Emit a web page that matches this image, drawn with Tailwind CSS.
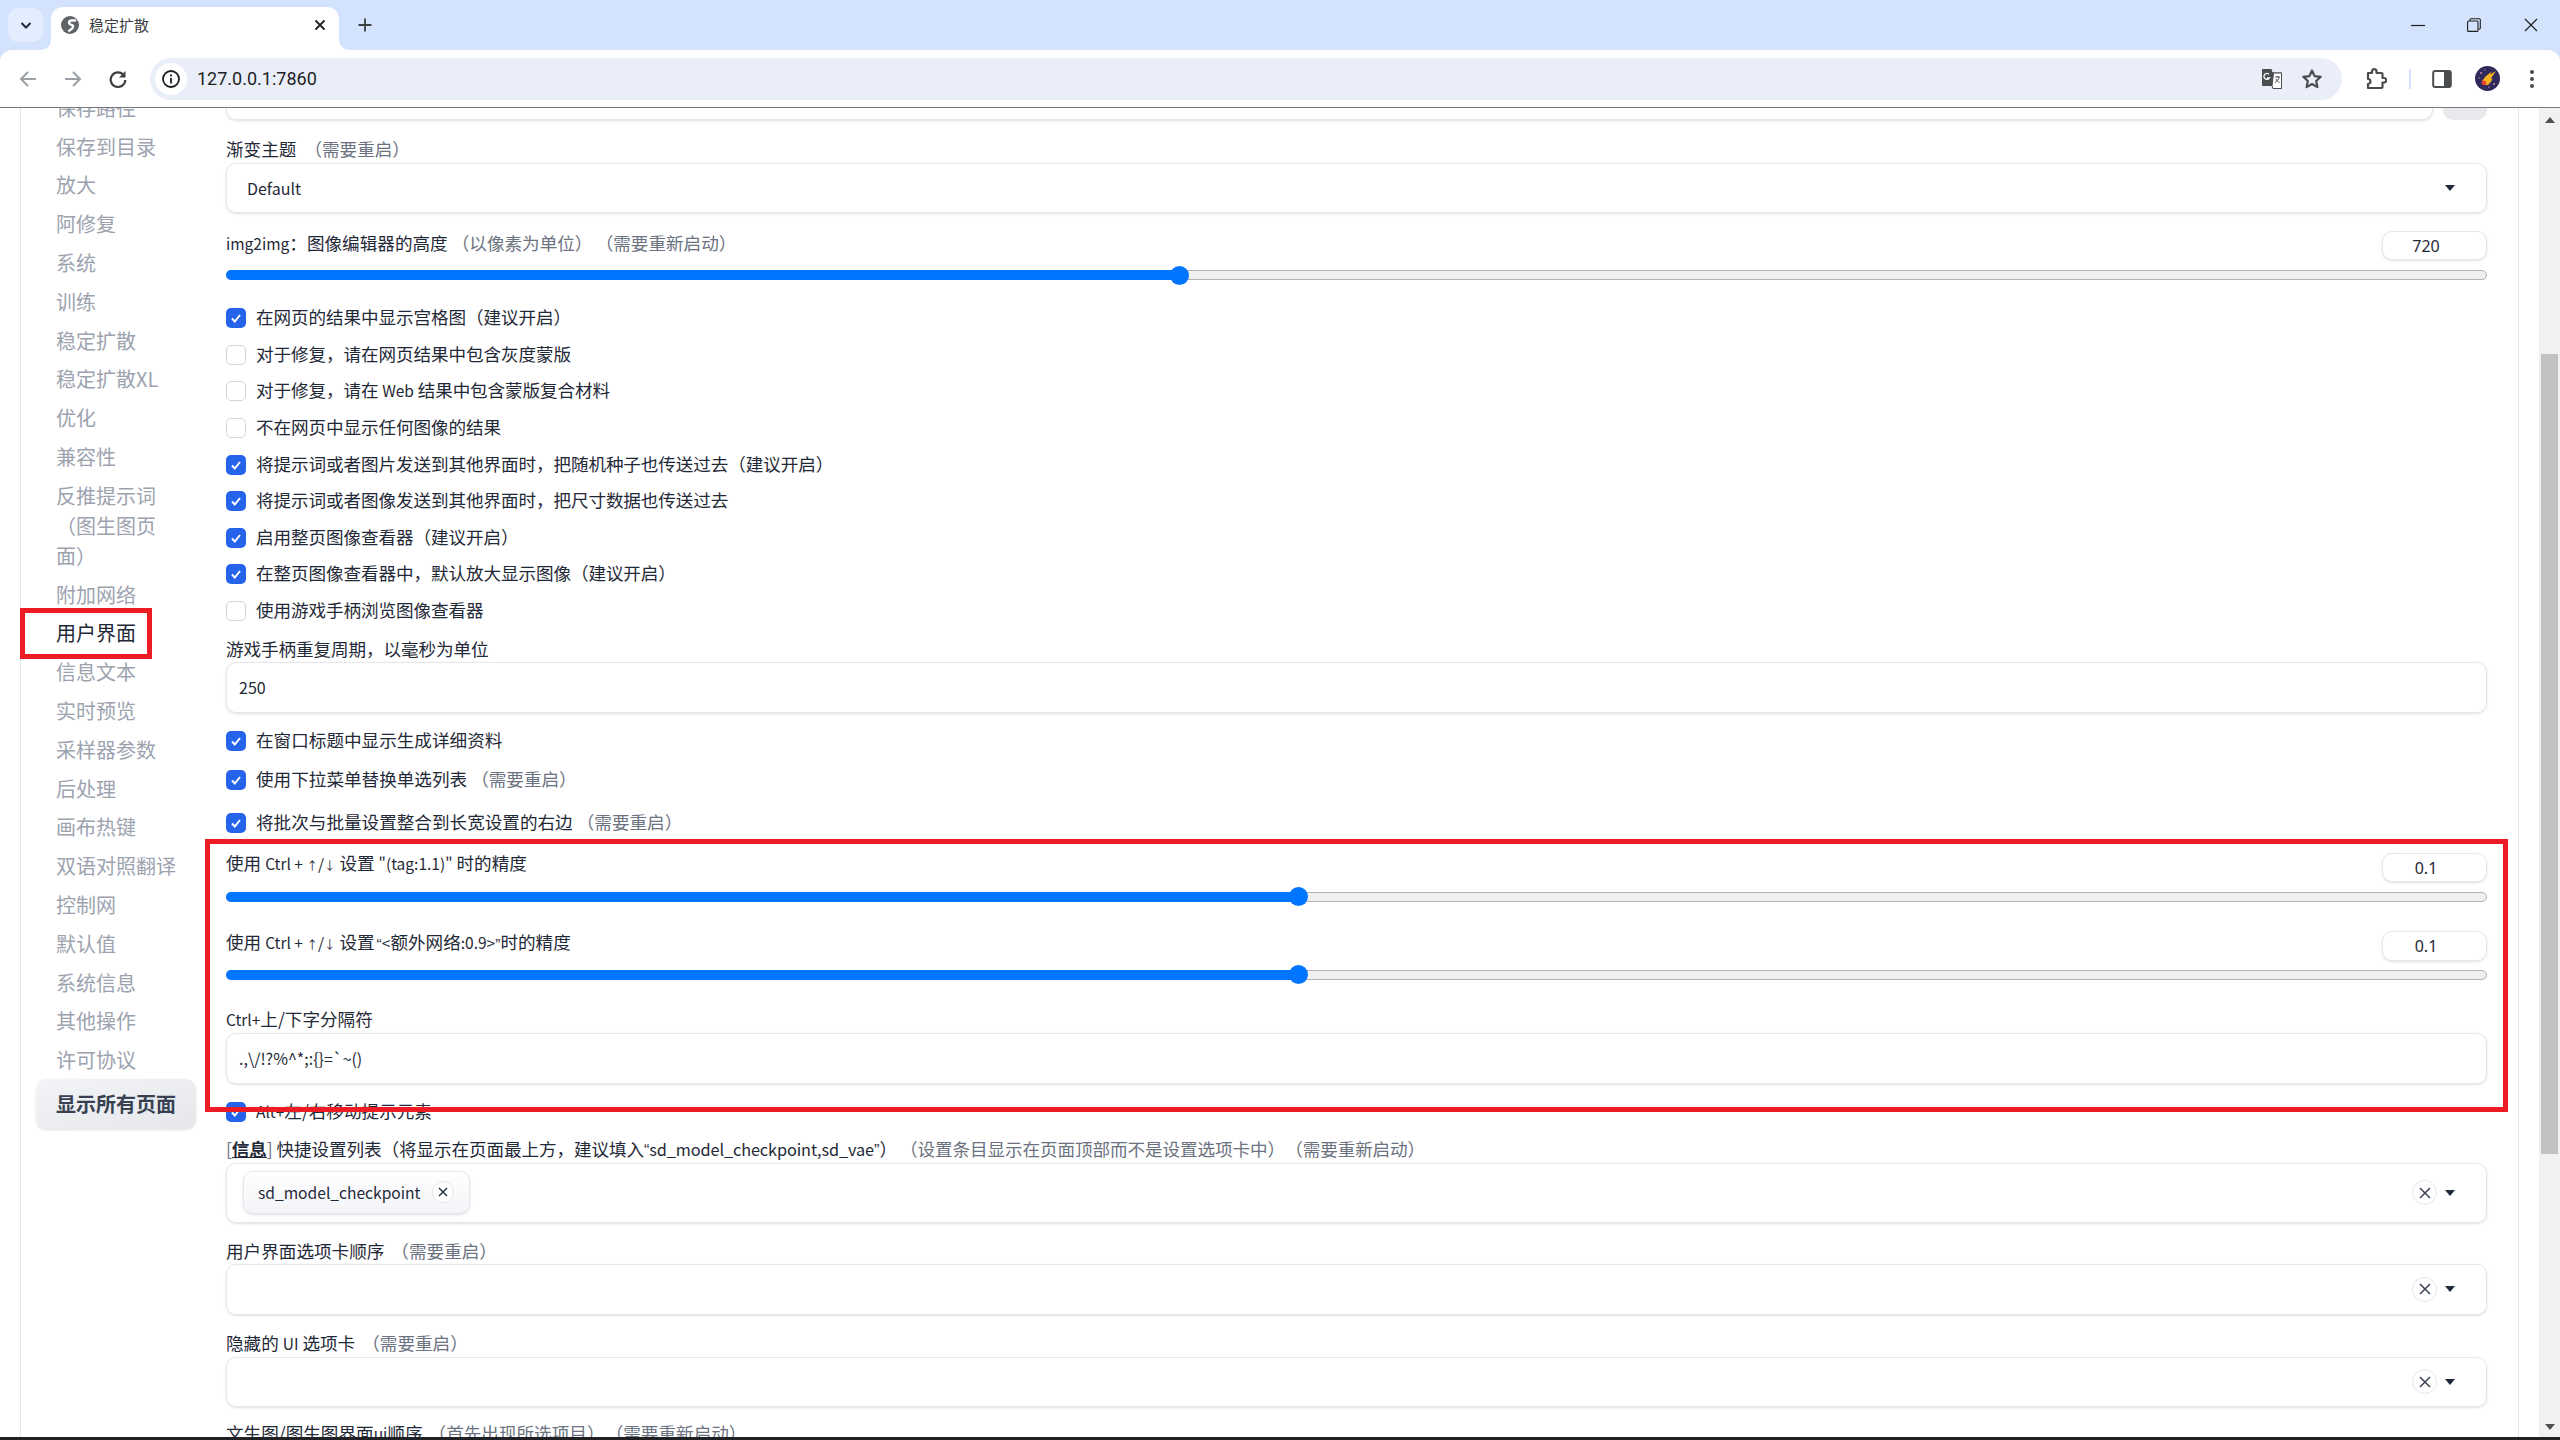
<!doctype html>
<html lang="zh">
<head>
<meta charset="utf-8">
<script src="https://cdn.jsdelivr.net/npm/@tailwindcss/browser@4"></script>
<title>稳定扩散</title>
</head>
<body class="font-['Noto_Sans_CJK_SC','Noto_Sans',sans-serif] bg-white text-[#1f2937] overflow-hidden">
<div class="relative flex flex-col w-[2560px] h-[1440px] overflow-hidden">
  <!-- tab strip -->
  <div class="flex h-[50px] shrink-0 bg-[#d3e3fd]">
    <div class="ml-[8px] mt-[8px] w-[35px] h-[34px] rounded-[10px] bg-[#e4edfd] flex items-center justify-center">
      <svg width="14" height="14" viewBox="0 0 14 14"><path d="M2.500 5l4.500 4.500L11.500 5" fill="none" stroke="#1f2937" stroke-width="2"/></svg>
    </div>
    <div class="relative ml-[8px] mt-[7px] w-[288px] h-[43px] bg-white rounded-t-[12px] flex items-center">
      <svg class="absolute -left-[10px] bottom-0" width="10" height="10" viewBox="0 0 10 10"><path d="M10 0v10H0a10 10 0 0 0 10-10z" fill="#fff"/></svg>
      <svg class="absolute -right-[10px] bottom-0" width="10" height="10" viewBox="0 0 10 10"><path d="M0 0v10h10A10 10 0 0 1 0 0z" fill="#fff"/></svg>
      <svg class="ml-[10px] -mt-[7px]" width="18" height="18" viewBox="0 0 18 18"><circle cx="9" cy="9" r="9" fill="#5f6368"/><path d="M15 4.200c-1.800.8-3.300-.2-5 .3s-2.800 2-1.300 3.500 3.800.4 3.300 2.900-3 2.300-4.500 4.600" fill="none" stroke="#fff" stroke-width="2.400"/></svg>
      <span class="ml-[10px] -mt-[7px] text-[15px] leading-[20px] text-[#3c4043]">稳定扩散</span>
      <svg class="absolute left-[263px] top-[12px]" width="12" height="12" viewBox="0 0 12 12"><path d="M1.500 1.500l9 9M10.500 1.500l-9 9" stroke="#1f1f1f" stroke-width="1.800"/></svg>
    </div>
    <svg class="ml-[19px] mt-[18px]" width="14" height="14" viewBox="0 0 14 14"><path d="M7 0.500v13M0.500 7h13" stroke="#3c4043" stroke-width="1.800"/></svg>
    <div class="ml-auto flex">
      <div class="w-[56px] h-[50px] flex items-center justify-center"><svg width="14" height="14" viewBox="0 0 14 14"><path d="M0 7.500h14" stroke="#1f1f1f" stroke-width="1.200"/></svg></div>
      <div class="w-[56px] h-[50px] flex items-center justify-center"><svg width="14" height="14" viewBox="0 0 14 14" fill="none" stroke="#1f1f1f" stroke-width="1.100"><rect x="0.600" y="3" width="10.400" height="10.400" rx="1"/><path d="M3 2.800V1.700a1 1 0 0 1 1-1h8.300a1 1 0 0 1 1 1V10a1 1 0 0 1-1 1h-1"/></svg></div>
      <div class="w-[58px] h-[50px] flex items-center justify-center"><svg width="14" height="14" viewBox="0 0 14 14"><path d="M1 1l12 12M13 1L1 13" stroke="#1f1f1f" stroke-width="1.200"/></svg></div>
    </div>
  </div>
  <!-- toolbar -->
  <div class="h-[57px] shrink-0 bg-[#d3e3fd]">
  <div class="flex items-center h-[57px] w-full bg-white rounded-t-[12px]">
    <div class="ml-[5px] w-[45px] flex justify-center"><svg width="20" height="20" viewBox="0 0 20 20" fill="none" stroke="#9aa0a6" stroke-width="2"><path d="M18 10H3M10 3l-7 7 7 7"/></svg></div>
    <div class="w-[45px] flex justify-center"><svg width="20" height="20" viewBox="0 0 20 20" fill="none" stroke="#9aa0a6" stroke-width="2"><path d="M2 10h15M10 3l7 7-7 7"/></svg></div>
    <div class="w-[45px] flex justify-center"><svg width="20" height="20" viewBox="0 0 20 20" fill="none" stroke="#3c4043" stroke-width="2.200"><path d="M16 6.500A7.300 7.300 0 1 0 17.300 11"/><path d="M17.500 2v6.500h-6.500z" fill="#3c4043" stroke="none"/></svg></div>
    <div class="ml-[10px] w-[2192px] h-[42px] rounded-full bg-[#e9eef9] flex items-center">
      <div class="ml-[5px] w-[32px] h-[32px] rounded-full bg-white flex items-center justify-center">
        <svg width="18" height="18" viewBox="0 0 18 18" fill="none" stroke="#1f1f1f" stroke-width="1.800"><circle cx="9" cy="9" r="8"/><path d="M9 8v5.500M9 4.500v2"/></svg>
      </div>
      <span class="ml-[10px] text-[18px] font-['Roboto'] text-[#1f1f1f]">127.0.0.1:7860</span>
      <div class="ml-auto w-[40px] flex justify-center">
        <svg width="22" height="22" viewBox="0 0 22 22"><path d="M1 1h9.500l1 3.500H20a1 1 0 0 1 1 1V20a1 1 0 0 1-1 1h-8l-1-3H2a1 1 0 0 1-1-1z" fill="#4a4d50"/><path d="M11 5h9.500v15.500h-8.500L11 18l1.500-13z" fill="#fff" stroke="#4a4d50" stroke-width="1"/><path d="M14 9h5M16.500 8v1M18 9c-.4 2.500-2 4.500-4 5.500M15 11c.6 1.500 2 3 3.500 3.500" fill="none" stroke="#4a4d50" stroke-width="1"/><path d="M8 6.200A3 3 0 1 0 8.500 10H6" fill="none" stroke="#fff" stroke-width="1.300"/></svg>
      </div>
      <div class="w-[40px] mr-[10px] flex justify-center">
        <svg width="22" height="22" viewBox="0 0 22 22"><path d="M11 2.500l2.600 5.600 6.100.7-4.500 4.200 1.200 6.100L11 16l-5.400 3.100 1.200-6.100L2.300 8.800l6.100-.7z" fill="none" stroke="#4a4d50" stroke-width="2.200" stroke-linejoin="round"/></svg>
      </div>
    </div>
    <div class="ml-[14px] w-[40px] flex justify-center">
      <svg width="22" height="22" viewBox="0 0 22 22"><path d="M3 5h4V3a2.300 2.300 0 0 1 4.500 0v2h5a1 1 0 0 1 1 1v4h1.500a2 2 0 0 1 0 4.500H17.500V19a1 1 0 0 1-1 1H3v-4a2.500 2.500 0 0 0 0-5z" fill="none" stroke="#4a4d50" stroke-width="2.200" stroke-linejoin="round"/></svg>
    </div>
    <div class="ml-[13px] w-[2px] h-[20px] bg-[#d3e3fd]"></div>
    <div class="ml-[11px] w-[40px] flex justify-center">
      <svg width="20" height="20" viewBox="0 0 20 20"><rect x="1.200" y="2" width="17.600" height="16" rx="2" fill="#fff" stroke="#4a4d50" stroke-width="2"/><path d="M12 2h5a2 2 0 0 1 2 2v12a2 2 0 0 1-2 2h-5z" fill="#4a4d50"/></svg>
    </div>
    <div class="ml-[5px] w-[40px] flex justify-center">
      <svg width="25" height="25" viewBox="0 0 25 25"><circle cx="12.500" cy="12.500" r="12.500" fill="#2e2a5c"/><path d="M21 5l-6 3.500 1.500-3-6 5-3 4a4 4 0 0 0 6 4l3-3.500 1-3-2 1z" fill="#f9b31c"/><path d="M7.500 14.500a2.600 2.600 0 1 0 4 3l-1-2.500z" fill="#e8412c"/><circle cx="6" cy="7" r="1" fill="#c98aa0"/><circle cx="19" cy="18" r="1" fill="#c98aa0"/><circle cx="4" cy="12" r=".7" fill="#c98aa0"/><circle cx="10" cy="4" r=".7" fill="#c98aa0"/><circle cx="14" cy="21" r=".7" fill="#c98aa0"/></svg>
    </div>
    <div class="ml-[5px] w-[40px] flex justify-center">
      <svg width="6" height="20" viewBox="0 0 6 20" fill="#4a4d50"><circle cx="3" cy="3" r="2"/><circle cx="3" cy="10" r="2"/><circle cx="3" cy="17" r="2"/></svg>
    </div>
  </div>
  </div>
  <div class="h-px shrink-0 bg-[#77797c]"></div>

  <!-- page -->
  <div class="relative flex flex-1 min-h-0 overflow-hidden">
    <div class="w-[20px] shrink-0"></div>
    <!-- sidebar -->
    <nav class="w-[206px] shrink-0 border-l border-[#e5e7eb] pl-[15px] text-[20px] leading-[30px] text-[#9ca3af] whitespace-nowrap">
      <div class="-mt-[19.500px] h-[38.800px] py-[4.400px] pl-[20px]">保存路径</div>
      <div class="h-[38.800px] py-[4.400px] pl-[20px]">保存到目录</div>
      <div class="h-[38.800px] py-[4.400px] pl-[20px]">放大</div>
      <div class="h-[38.800px] py-[4.400px] pl-[20px]">阿修复</div>
      <div class="h-[38.800px] py-[4.400px] pl-[20px]">系统</div>
      <div class="h-[38.800px] py-[4.400px] pl-[20px]">训练</div>
      <div class="h-[38.800px] py-[4.400px] pl-[20px]">稳定扩散</div>
      <div class="h-[38.800px] py-[4.400px] pl-[20px]">稳定扩散XL</div>
      <div class="h-[38.800px] py-[4.400px] pl-[20px]">优化</div>
      <div class="h-[38.800px] py-[4.400px] pl-[20px]">兼容性</div>
      <div class="h-[98.800px] py-[4.400px] pl-[20px]">反推提示词<br>（图生图页<br>面）</div>
      <div class="h-[38.800px] py-[4.400px] pl-[20px]">附加网络</div>
      <div class="h-[38.800px] py-[4.400px] pl-[20px] text-[#1f2937]">用户界面</div>
      <div class="h-[38.800px] py-[4.400px] pl-[20px]">信息文本</div>
      <div class="h-[38.800px] py-[4.400px] pl-[20px]">实时预览</div>
      <div class="h-[38.800px] py-[4.400px] pl-[20px]">采样器参数</div>
      <div class="h-[38.800px] py-[4.400px] pl-[20px]">后处理</div>
      <div class="h-[38.800px] py-[4.400px] pl-[20px]">画布热键</div>
      <div class="h-[38.800px] py-[4.400px] pl-[20px]">双语对照翻译</div>
      <div class="h-[38.800px] py-[4.400px] pl-[20px]">控制网</div>
      <div class="h-[38.800px] py-[4.400px] pl-[20px]">默认值</div>
      <div class="h-[38.800px] py-[4.400px] pl-[20px]">系统信息</div>
      <div class="h-[38.800px] py-[4.400px] pl-[20px]">其他操作</div>
      <div class="h-[38.800px] py-[4.400px] pl-[20px]">许可协议</div>
      <div class="-mt-[0.500px] w-[160px] h-[50px] rounded-[10px] bg-gradient-to-br from-[#f3f4f6] to-[#e5e7eb] shadow-sm flex items-center pl-[20px] font-bold text-[#374151]">显示所有页面</div>
    </nav>
    <!-- content -->
    <main class="w-[2261px] shrink-0 text-[17.600px] leading-[24px] text-[#1f2937]">
      <div class="flex gap-[10px] h-[12px]">
        <div class="flex-1 rounded-b-[10px] border border-t-0 border-[#e5e7eb] shadow-sm"></div>
        <div class="w-[44px] rounded-b-[10px] bg-[#e8e9ed]"></div>
      </div>

      <div class="mt-[17px] h-[24px] leading-[23px]">渐变主题<span class="ml-[8px] text-[#6b7280]">（需要重启）</span></div>
      <div class="mt-[2px] h-[50px] rounded-[10px] border border-[#e5e7eb] shadow-sm flex items-center pl-[20px] pr-[31px] pb-[1px] text-[16px]">Default<svg class="ml-auto" width="10" height="6" viewBox="0 0 10 6"><path d="M0 0h10L5 6z" fill="#1f2937"/></svg></div>

      <div class="mt-[18px] h-[29px] flex items-center justify-between">
        <span class="-mt-[6px]"><span class="text-[15.500px]">img2img</span>：图像编辑器的高度<span class="ml-[4px] text-[#6b7280]">（以像素为单位）</span><span class="ml-[12px] text-[#6b7280]">（需要重新启动）</span></span>
        <div class="w-[105px] h-[29px] rounded-[10px] border border-[#e5e7eb] shadow-sm flex items-center justify-center pr-[17px] pt-[1px] text-[16px] font-['Noto_Sans']">720</div>
      </div>
      <div class="relative mt-[10px] h-[10px] rounded-full bg-[#efefef] border border-[#b2b2b2]">
        <div class="absolute -left-px -top-px h-[10px] w-[954px] rounded-full bg-[#0075ff]"></div>
        <div class="absolute left-[943px] -top-[5.500px] w-[19px] h-[19px] rounded-full bg-[#0075ff]"></div>
      </div>

      <div class="mt-[20px] tracking-[-0.100px]">
        <div class="h-[36.600px] pb-[2px] flex items-center gap-[10px]"><span class="mt-[2px] w-[20px] h-[20px] rounded-[5px] bg-[#2563eb] flex items-center justify-center"><svg width="12" height="12" viewBox="0 0 12 12"><path d="M2 6.500l2.800 3L10 3" fill="none" stroke="#fff" stroke-width="2"/></svg></span>在网页的结果中显示宫格图（建议开启）</div>
        <div class="h-[36.600px] pb-[2px] flex items-center gap-[10px]"><span class="mt-[2px] w-[20px] h-[20px] rounded-[5px] border border-[#d1d5db]"></span>对于修复，请在网页结果中包含灰度蒙版</div>
        <div class="h-[36.600px] pb-[2px] flex items-center gap-[10px]"><span class="mt-[2px] w-[20px] h-[20px] rounded-[5px] border border-[#d1d5db]"></span><span>对于修复，请在 <span class="text-[15.500px]">Web</span> 结果中包含蒙版复合材料</span></div>
        <div class="h-[36.600px] pb-[2px] flex items-center gap-[10px]"><span class="mt-[2px] w-[20px] h-[20px] rounded-[5px] border border-[#d1d5db]"></span>不在网页中显示任何图像的结果</div>
        <div class="h-[36.600px] pb-[2px] flex items-center gap-[10px]"><span class="mt-[2px] w-[20px] h-[20px] rounded-[5px] bg-[#2563eb] flex items-center justify-center"><svg width="12" height="12" viewBox="0 0 12 12"><path d="M2 6.500l2.800 3L10 3" fill="none" stroke="#fff" stroke-width="2"/></svg></span>将提示词或者图片发送到其他界面时，把随机种子也传送过去（建议开启）</div>
        <div class="h-[36.600px] pb-[2px] flex items-center gap-[10px]"><span class="mt-[2px] w-[20px] h-[20px] rounded-[5px] bg-[#2563eb] flex items-center justify-center"><svg width="12" height="12" viewBox="0 0 12 12"><path d="M2 6.500l2.800 3L10 3" fill="none" stroke="#fff" stroke-width="2"/></svg></span>将提示词或者图像发送到其他界面时，把尺寸数据也传送过去</div>
        <div class="h-[36.600px] pb-[2px] flex items-center gap-[10px]"><span class="mt-[2px] w-[20px] h-[20px] rounded-[5px] bg-[#2563eb] flex items-center justify-center"><svg width="12" height="12" viewBox="0 0 12 12"><path d="M2 6.500l2.800 3L10 3" fill="none" stroke="#fff" stroke-width="2"/></svg></span>启用整页图像查看器（建议开启）</div>
        <div class="h-[36.600px] pb-[2px] flex items-center gap-[10px]"><span class="mt-[2px] w-[20px] h-[20px] rounded-[5px] bg-[#2563eb] flex items-center justify-center"><svg width="12" height="12" viewBox="0 0 12 12"><path d="M2 6.500l2.800 3L10 3" fill="none" stroke="#fff" stroke-width="2"/></svg></span>在整页图像查看器中，默认放大显示图像（建议开启）</div>
        <div class="h-[36.600px] pb-[2px] flex items-center gap-[10px]"><span class="mt-[2px] w-[20px] h-[20px] rounded-[5px] border border-[#d1d5db]"></span>使用游戏手柄浏览图像查看器</div>
      </div>

      <div class="mt-[8.600px] h-[24px] leading-[22px] tracking-[-0.100px]">游戏手柄重复周期，以毫秒为单位</div>
      <div class="h-[51px] rounded-[10px] border border-[#e5e7eb] shadow-sm flex items-center pl-[12px] pb-[1px] text-[16px]">250</div>

      <div class="mt-[10px] h-[36px] pb-[2px] flex items-center gap-[10px]"><span class="mt-[2px] w-[20px] h-[20px] rounded-[5px] bg-[#2563eb] flex items-center justify-center"><svg width="12" height="12" viewBox="0 0 12 12"><path d="M2 6.500l2.800 3L10 3" fill="none" stroke="#fff" stroke-width="2"/></svg></span>在窗口标题中显示生成详细资料</div>
      <div class="mt-[3px] h-[36px] pb-[2px] flex items-center gap-[10px]"><span class="mt-[2px] w-[20px] h-[20px] rounded-[5px] bg-[#2563eb] flex items-center justify-center"><svg width="12" height="12" viewBox="0 0 12 12"><path d="M2 6.500l2.800 3L10 3" fill="none" stroke="#fff" stroke-width="2"/></svg></span><span>使用下拉菜单替换单选列表<span class="ml-[4px] text-[#6b7280]">（需要重启）</span></span></div>
      <div class="mt-[7px] h-[36px] pb-[2px] flex items-center gap-[10px]"><span class="mt-[2px] w-[20px] h-[20px] rounded-[5px] bg-[#2563eb] flex items-center justify-center"><svg width="12" height="12" viewBox="0 0 12 12"><path d="M2 6.500l2.800 3L10 3" fill="none" stroke="#fff" stroke-width="2"/></svg></span><span>将批次与批量设置整合到长宽设置的右边<span class="ml-[4px] text-[#6b7280]">（需要重启）</span></span></div>

      <div class="mt-[12px] h-[29px] flex items-center justify-between">
        <span class="-mt-[6px]">使用 <span class="text-[15.500px]">Ctrl + </span><span class="text-[11.500px]">↑</span><span class="text-[15.500px]">/</span><span class="text-[11.500px]">↓</span> 设置 <span class="text-[15.500px]">"(tag:1.1)"</span> 时的精度</span>
        <div class="w-[105px] h-[29px] rounded-[10px] border border-[#e5e7eb] shadow-sm flex items-center justify-center pr-[17px] pt-[1px] text-[16px] font-['Noto_Sans']">0.1</div>
      </div>
      <div class="relative mt-[10px] h-[10px] rounded-full bg-[#efefef] border border-[#b2b2b2]">
        <div class="absolute -left-px -top-px h-[10px] w-[1073px] rounded-full bg-[#0075ff]"></div>
        <div class="absolute left-[1061.500px] -top-[5.500px] w-[19px] h-[19px] rounded-full bg-[#0075ff]"></div>
      </div>

      <div class="mt-[29px] h-[30px] flex items-center justify-between">
        <span class="-mt-[6px]">使用 <span class="text-[15.500px]">Ctrl + </span><span class="text-[11.500px]">↑</span><span class="text-[15.500px]">/</span><span class="text-[11.500px]">↓</span> 设置<span class="ml-[2px] font-['Liberation_Sans'] text-[15.500px]">“</span><span class="text-[15.500px]">&lt;</span>额外网络<span class="text-[15.500px]">:0.9&gt;</span><span class="font-['Liberation_Sans'] text-[15.500px]">”</span>时的精度</span>
        <div class="w-[105px] h-[30px] rounded-[10px] border border-[#e5e7eb] shadow-sm flex items-center justify-center pr-[17px] pt-[1px] text-[16px] font-['Noto_Sans']">0.1</div>
      </div>
      <div class="relative mt-[9px] h-[10px] rounded-full bg-[#efefef] border border-[#b2b2b2]">
        <div class="absolute -left-px -top-px h-[10px] w-[1073px] rounded-full bg-[#0075ff]"></div>
        <div class="absolute left-[1061.500px] -top-[5.500px] w-[19px] h-[19px] rounded-full bg-[#0075ff]"></div>
      </div>

      <div class="mt-[28px] h-[24px] leading-[22px]"><span class="text-[15.500px]">Ctrl+</span>上/下字分隔符</div>
      <div class="mt-[1px] h-[51px] rounded-[10px] border border-[#e5e7eb] shadow-sm flex items-center pl-[12px] pb-[1px] text-[16px]">.,\/!?%^*;:{}=`~()</div>

      <div class="mt-[10px] h-[36px] pb-[2px] flex items-center gap-[10px]"><span class="mt-[2px] w-[20px] h-[20px] rounded-[5px] bg-[#2563eb] flex items-center justify-center"><svg width="12" height="12" viewBox="0 0 12 12"><path d="M2 6.500l2.800 3L10 3" fill="none" stroke="#fff" stroke-width="2"/></svg></span><span><span class="text-[15.500px]">Alt+</span>左/右移动提示元素</span></div>

      <div class="mt-[8px] h-[24px] leading-[22px] tracking-[-0.100px]"><span class="text-[#6b7280]">[</span><b class="font-bold underline">信息</b><span class="text-[#6b7280]">]</span> 快捷设置列表（将显示在页面最上方，建议填入<span class="font-['Liberation_Sans'] text-[16.300px]">“</span><span class="text-[16.300px]">sd_model_checkpoint,sd_vae</span><span class="font-['Liberation_Sans'] text-[16.300px]">”</span>）<span class="ml-[12px] text-[#6b7280]">（设置条目显示在页面顶部而不是设置选项卡中）</span><span class="ml-[9px] text-[#6b7280]">（需要重新启动）</span></div>
      <div class="mt-[1px] h-[60px] rounded-[10px] border border-[#e5e7eb] shadow-sm flex items-center pl-[16px] pr-[31px]">
        <div class="h-[43px] w-[227px] rounded-[10px] border border-[#e5e7eb] bg-gradient-to-b from-white to-[#f3f4f8] shadow-sm flex items-center pl-[14px] pb-[1px] text-[15.600px]">sd_model_checkpoint
          <span class="ml-auto mr-[15px] w-[22px] h-[22px] rounded-full border border-[#e5e7eb] bg-white flex items-center justify-center"><svg width="10" height="10" viewBox="0 0 10 10"><path d="M1 1l8 8M9 1L1 9" stroke="#1f2937" stroke-width="1.400"/></svg></span>
        </div>
        <span class="ml-auto w-[25px] h-[25px] rounded-full border border-[#e5e7eb] flex items-center justify-center"><svg width="12" height="12" viewBox="0 0 12 12"><path d="M1 1l10 10M11 1L1 11" stroke="#374151" stroke-width="1.500"/></svg></span>
        <svg class="ml-[8px]" width="10" height="6" viewBox="0 0 10 6"><path d="M0 0h10L5 6z" fill="#1f2937"/></svg>
      </div>

      <div class="mt-[17px] h-[24px] leading-[22px]">用户界面选项卡顺序<span class="ml-[7px] text-[#6b7280]">（需要重启）</span></div>
      <div class="h-[51px] rounded-[10px] border border-[#e5e7eb] shadow-sm flex items-center justify-end pr-[31px]">
        <span class="w-[25px] h-[25px] rounded-full border border-[#e5e7eb] flex items-center justify-center"><svg width="12" height="12" viewBox="0 0 12 12"><path d="M1 1l10 10M11 1L1 11" stroke="#374151" stroke-width="1.500"/></svg></span>
        <svg class="ml-[8px]" width="10" height="6" viewBox="0 0 10 6"><path d="M0 0h10L5 6z" fill="#1f2937"/></svg>
      </div>

      <div class="mt-[17px] h-[24px] leading-[22px]">隐藏的 <span class="text-[15.500px]">UI</span> 选项卡<span class="ml-[7px] text-[#6b7280]">（需要重启）</span></div>
      <div class="mt-[1px] h-[50px] rounded-[10px] border border-[#e5e7eb] shadow-sm flex items-center justify-end pr-[31px]">
        <span class="w-[25px] h-[25px] rounded-full border border-[#e5e7eb] flex items-center justify-center"><svg width="12" height="12" viewBox="0 0 12 12"><path d="M1 1l10 10M11 1L1 11" stroke="#374151" stroke-width="1.500"/></svg></span>
        <svg class="ml-[8px]" width="10" height="6" viewBox="0 0 10 6"><path d="M0 0h10L5 6z" fill="#1f2937"/></svg>
      </div>

      <div class="mt-[15px] h-[24px] leading-[22px]">文生图/图生图界面<span class="text-[15.500px]">ui</span>顺序<span class="ml-[6px] text-[#6b7280]">（首先出现所选项目）</span><span class="ml-[10px] text-[#6b7280]">（需要重新启动）</span></div>
    </main>
    <div class="w-[31px] shrink-0"></div>
    <div class="w-px shrink-0 bg-[#e5e7eb]"></div>
    <div class="w-[20px] shrink-0"></div>
    <!-- scrollbar -->
    <div class="w-[21px] shrink-0 bg-[#f1f1f1] flex flex-col items-center">
      <svg class="mt-[9px]" width="10" height="6" viewBox="0 0 10 6"><path d="M0 6h10L5 0z" fill="#505050"/></svg>
      <div class="mt-[231px] w-[17px] h-[800px] bg-[#c1c1c1]"></div>
      <svg class="mt-auto mb-[7px]" width="10" height="6" viewBox="0 0 10 6"><path d="M0 0h10L5 6z" fill="#505050"/></svg>
    </div>
    <!-- red annotations -->
    <div class="absolute left-[20px] top-[500px] w-[132px] h-[51px] border-[5px] border-[#ed1c24]"></div>
    <div class="absolute left-[205px] top-[731px] w-[2303px] h-[273px] border-[5px] border-[#ed1c24]"></div>
  </div>
  <div class="h-[3px] shrink-0 bg-[#202124]"></div>
</div>
</body>
</html>
